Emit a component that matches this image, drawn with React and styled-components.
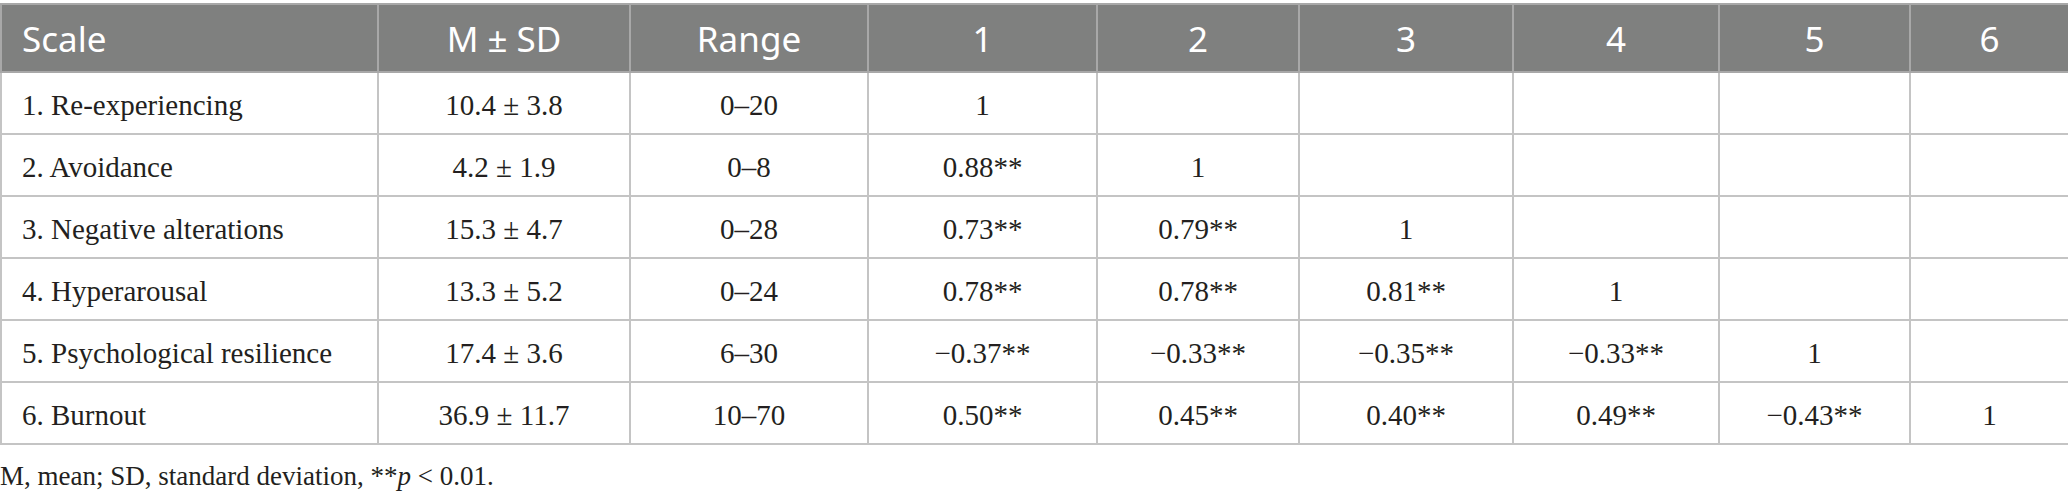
import React from 'react';
import styled, { createGlobalStyle } from 'styled-components';

const GlobalStyle = createGlobalStyle`
  html, body {
    margin: 0;
    padding: 0;
    background: #ffffff;
  }
`;

const Page = styled.div`
  width: 2068px;
  padding-top: 3px;
  font-family: "Liberation Serif", "Times New Roman", serif;
  color: #231f20;
`;

const Table = styled.table`
  width: 2068px;
  border-collapse: collapse;
  table-layout: fixed;
  border: 2px solid #bdbdbd;
`;

const HeadCell = styled.th`
  height: 66px;
  padding: 0 ${(p) => (p.$left ? '20px' : '0')};
  background: #7f807f;
  color: #ffffff;
  font-family: "Noto Sans", "Open Sans", sans-serif;
  font-weight: 400;
  font-size: 35px;
  text-align: ${(p) => (p.$left ? 'left' : 'center')};
  border: 2px solid #a8a8a8;
  vertical-align: middle;
`;

const Cell = styled.td`
  height: 56px;
  padding: 4px ${(p) => (p.$left ? '20px' : '0')} 0;
  font-size: 29px;
  text-align: ${(p) => (p.$left ? 'left' : 'center')};
  border: 2px solid #c4c4c4;
  vertical-align: middle;
  white-space: nowrap;
`;

const Note = styled.p`
  margin: 16px 0 0;
  font-size: 27px;
  color: #231f20;
`;

const widths = [377, 252, 238, 229, 202, 214, 206, 191, 159];
const heads = ['Scale', 'M \u00B1 SD', 'Range', '1', '2', '3', '4', '5', '6'];

const rows = [
  ['1. Re-experiencing', '10.4 \u00B1 3.8', '0\u201320', '1', '', '', '', '', ''],
  ['2. Avoidance', '4.2 \u00B1 1.9', '0\u20138', '0.88**', '1', '', '', '', ''],
  ['3. Negative alterations', '15.3 \u00B1 4.7', '0\u201328', '0.73**', '0.79**', '1', '', '', ''],
  ['4. Hyperarousal', '13.3 \u00B1 5.2', '0\u201324', '0.78**', '0.78**', '0.81**', '1', '', ''],
  ['5. Psychological resilience', '17.4 \u00B1 3.6', '6\u201330', '\u22120.37**', '\u22120.33**', '\u22120.35**', '\u22120.33**', '1', ''],
  ['6. Burnout', '36.9 \u00B1 11.7', '10\u201370', '0.50**', '0.45**', '0.40**', '0.49**', '\u22120.43**', '1'],
];

export default function App() {
  return (
    <Page>
      <GlobalStyle />
      <Table>
        <colgroup>
          {widths.map((w, i) => (
            <col key={i} style={{ width: w }} />
          ))}
        </colgroup>
        <thead>
          <tr>
            {heads.map((h, i) => (
              <HeadCell key={i} $left={i === 0}>
                {h}
              </HeadCell>
            ))}
          </tr>
        </thead>
        <tbody>
          {rows.map((r, ri) => (
            <tr key={ri}>
              {r.map((c, ci) => (
                <Cell key={ci} $left={ci === 0}>
                  {c}
                </Cell>
              ))}
            </tr>
          ))}
        </tbody>
      </Table>
      <Note>
        M, mean; SD, standard deviation, **<i>p</i> &lt; 0.01.
      </Note>
    </Page>
  );
}
